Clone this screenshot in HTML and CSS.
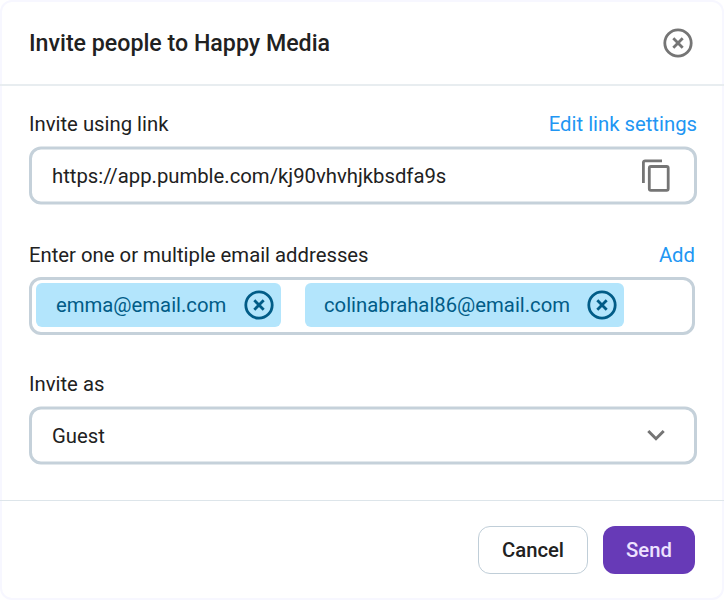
FILE: index.html
```html
<!DOCTYPE html>
<html lang="en">
<head>
<meta charset="utf-8">
<title>Invite people</title>
<link rel="stylesheet" href="styles.css">
</head>
<body>
<main class="dialog">
  <header class="header">
    <h1 class="title">Invite people to Happy Media</h1>
    <svg class="close" width="30" height="30" viewBox="0 0 30 30"><circle cx="15" cy="15" r="13.2"/><path d="M10.3 10.3l9.4 9.4M19.7 10.3l-9.4 9.4"/></svg>
  </header>
  <section class="content">
    <div class="group">
      <div class="labels"><label>Invite using link</label><a>Edit link settings</a></div>
      <div class="field">
        <span>https://app.pumble.com/kj90vhvhjkbsdfa9s</span>
        <svg class="copy" width="30" height="34" viewBox="0 0 30 34"><path d="M2.4 24.5V4a1.7 1.7 0 0 1 1.7-1.7H21"/><rect x="8.3" y="8" width="18.9" height="23.8" rx="1.6"/></svg>
      </div>
    </div>
    <div class="group">
      <div class="labels narrow"><label>Enter one or multiple email addresses</label><a>Add</a></div>
      <div class="field emails">
        <div class="chip first"><span>emma@email.com</span><svg width="30" height="30" viewBox="0 0 30 30"><circle cx="15" cy="15" r="13.2"/><path d="M10.3 10.3l9.4 9.4M19.7 10.3l-9.4 9.4"/></svg></div>
        <div class="chip second"><span>colinabrahal86@email.com</span><svg width="30" height="30" viewBox="0 0 30 30"><circle cx="15" cy="15" r="13.2"/><path d="M10.3 10.3l9.4 9.4M19.7 10.3l-9.4 9.4"/></svg></div>
      </div>
    </div>
    <div class="group">
      <div class="labels"><label>Invite as</label></div>
      <div class="field">
        <span>Guest</span>
        <svg class="chevron" width="20" height="14" viewBox="0 0 20 14"><path d="M2.3 2.5l7.7 7.7 7.7-7.7"/></svg>
      </div>
    </div>
  </section>
  <footer class="footer">
    <button class="button cancel">Cancel</button>
    <button class="button send">Send</button>
  </footer>
</main>
</body>
</html>
```
FILE: styles.css
```css
* { box-sizing: border-box; }
body { margin: 0; background: #fff; font-family: Roboto, sans-serif; font-size: 20.3px; color: #212121; }
svg { display: block; flex: none; fill: none; }
.dialog { height: 600px; display: grid; grid-template-rows: 86px 415px 99px; border-radius: 12px; box-shadow: inset 0 0 0 2px #f7f7ff; }
.header { display: flex; align-items: center; justify-content: space-between; padding: 0 31px 0 29px; border-bottom: 2px solid #e8edf0; }
.title { margin: 2px 0 0; font-size: 23.2px; font-weight: 500; line-height: 28px; }
.close { stroke: #757575; stroke-width: 2.8; margin-top: 2px; }
.content { padding: 23px 27px 0 29px; border-bottom: 1px solid #dde5ea; display: grid; grid-template-rows: 131px 129px 130px; }
.labels { height: 38px; line-height: 31px; display: flex; justify-content: space-between; white-space: nowrap; }
.labels a { color: #2196f3; }
.narrow { height: 37px; margin-right: 2px; }
.field { height: 58px; border: 3px solid #c5d1da; border-radius: 12px; display: flex; align-items: center; justify-content: space-between; padding: 0 23px 0 20px; white-space: nowrap; transform: translateY(-.5px); }
.copy { stroke: #757575; stroke-width: 2.8; }
.chevron { stroke: #757575; stroke-width: 3; margin-right: 5px; }
.emails { margin-right: 2px; padding: 0 0 2px 4px; justify-content: flex-start; gap: 24px; transform: none; }
.chip { height: 44px; background: #b3e5fc; color: #015c87; border-radius: 6px; display: flex; align-items: center; justify-content: space-between; }
.chip svg { stroke: #015c87; stroke-width: 2.8; }
.first { width: 245px; padding: 0 7px 0 20px; }
.second { width: 319px; padding: 0 7px 0 19px; }
.footer { display: flex; justify-content: flex-end; gap: 15px; padding: 25px 29px 0; }
.button { height: 48px; border-radius: 12px; font: 500 20.3px Roboto, sans-serif; padding: 0; }
.cancel { width: 110px; background: #fff; border: 1.5px solid #c0ced8; color: #212121; }
.send { width: 92px; background: #673ab7; border: 0; color: #ede2ff; }
```
